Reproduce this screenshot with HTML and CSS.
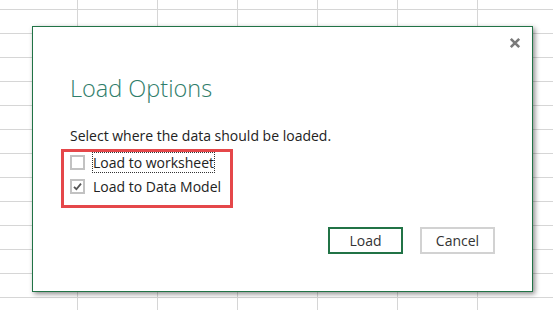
FILE: index.html
```html
<!DOCTYPE html>
<html lang="en">
<head>
    <meta charset="UTF-8">
    <meta name="viewport" content="width=device-width, initial-scale=1.0">
    <title>Load Options</title>
    <link rel="stylesheet" href="styles.css">
</head>
<body>
    <div class="sheet">
        <div class="dialog">
            <div class="dialog-top">
                <button class="close" title="Close">
                    <svg width="12" height="12" viewBox="0 0 12 12">
                        <path d="M1.8 1.8 L10.2 10.2 M10.2 1.8 L1.8 10.2" stroke="#7a7a7a" stroke-width="2.6" />
                    </svg>
                </button>
            </div>

            <h1>Load Options</h1>
            <p class="lead">Select where the data should be loaded.</p>

            <div class="options">
                <label class="option">
                    <span class="box"></span>
                    <span class="focus">Load to worksheet</span>
                </label>
                <label class="option">
                    <span class="box">
                        <svg width="11" height="11" viewBox="0 0 11 11">
                            <path d="M2 5.8 L4.4 8.2 L9 2.6" fill="none" stroke="#555" stroke-width="1.8" />
                        </svg>
                    </span>
                    <span>Load to Data Model</span>
                </label>
            </div>

            <div class="actions">
                <button class="btn primary">Load</button>
                <button class="btn">Cancel</button>
            </div>
        </div>
    </div>
</body>
</html>
```

FILE: styles.css
```css
body {
    margin: 0;
    font-family: "Open Sans", "Noto Sans", sans-serif;
    color: #222;
}

.sheet {
    width: 553px;
    height: 310px;
    overflow: hidden;
    padding: 26px 0 0 32px;
    box-sizing: border-box;
    background-color: #fff;
    background-image:
        linear-gradient(to right, #d6d6d6 1px, transparent 1px),
        linear-gradient(to bottom, #d6d6d6 1px, transparent 1px);
    background-size: 80px 100%, 100% 24px;
    background-position: 77px 0, 0 9px;
}

.dialog {
    width: 501px;
    height: 266px;
    box-sizing: border-box;
    background-color: #fff;
    border: 1px solid #217346;
    box-shadow: 2px 2px 5px rgba(0, 0, 0, 0.45);
    padding: 0 37px;
    display: flex;
    flex-direction: column;
}

.dialog-top {
    display: flex;
    justify-content: flex-end;
    height: 34px;
    margin-right: -27px;
}

.close {
    margin-top: 9px;
    width: 14px;
    height: 14px;
    padding: 0;
    border: none;
    background: none;
    display: flex;
    align-items: center;
    justify-content: center;
}

h1 {
    margin: 11px 0 0 0;
    font-weight: 300;
    font-size: 23.5px;
    line-height: 32px;
    color: #2f7d6a;
}

.lead {
    margin: 22px 0 0 0;
    font-size: 14px;
    line-height: 20px;
}

.options {
    margin: 3px 0 0 -9px;
    width: 172px;
    box-sizing: border-box;
    padding: 0 0 9px 6px;
    border: 3px solid #e5474a;
    display: flex;
    flex-direction: column;
    gap: 4px;
}

.option {
    display: flex;
    align-items: center;
    gap: 8px;
    height: 20px;
    font-size: 14px;
}

.box {
    width: 15px;
    height: 15px;
    box-sizing: border-box;
    border: 2px solid #c2c2c2;
    background-color: #fff;
    display: flex;
    align-items: center;
    justify-content: center;
}

.focus {
    outline: 1px dotted #333;
    outline-offset: 0;
}

.actions {
    margin-top: auto;
    margin-bottom: 37px;
    display: flex;
    justify-content: flex-end;
    gap: 17px;
}

.btn {
    width: 75px;
    height: 27px;
    font-family: "Open Sans", "Noto Sans", sans-serif;
    font-size: 14px;
    color: #333;
    background-color: #fff;
    border: 2px solid #d2d2d2;
    cursor: pointer;
}

.btn.primary {
    border-color: #217346;
}
```
